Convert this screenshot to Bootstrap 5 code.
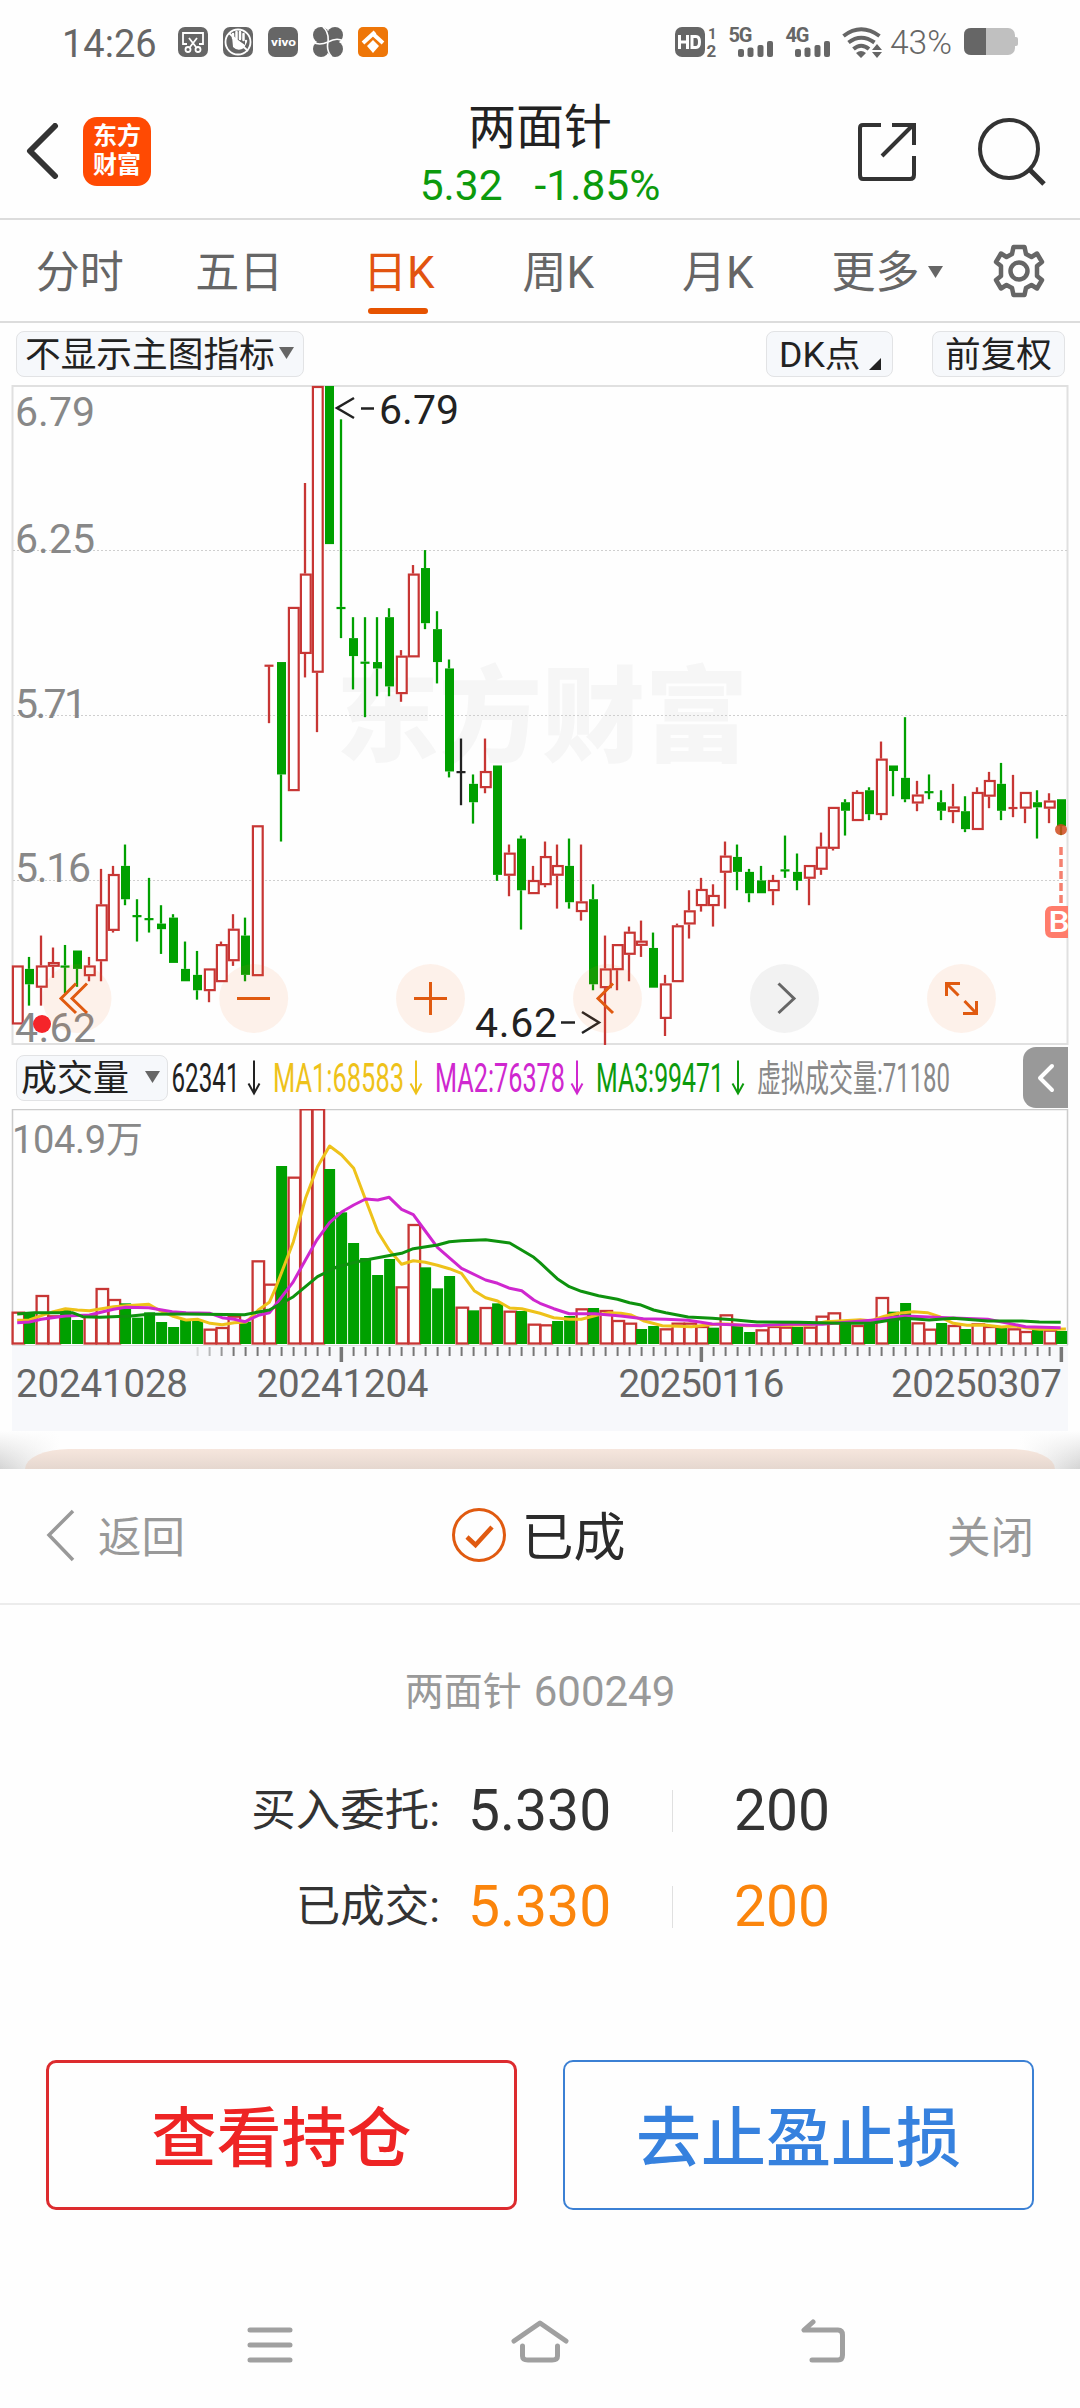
<!DOCTYPE html>
<html lang="zh-CN">
<head>
<meta charset="utf-8">
<meta name="viewport" content="width=device-width, initial-scale=1">
<title>两面针 600249</title>
<link href="https://cdn.jsdelivr.net/npm/bootstrap@5.3.0/dist/css/bootstrap.min.css" rel="stylesheet">
<style>
body{font-family:Roboto,"Noto Sans CJK SC",sans-serif;color:#222;background:#fefefe;width:1080px;line-height:1}
svg{display:block;flex:none}
svg text{font-family:Roboto,"Noto Sans CJK SC",sans-serif}
.status-bar{height:84px;padding:0 60px 0 62px;color:#666}
.clock{font-size:38px;width:116px;padding-top:3px}
.pct{font-size:33.5px;font-weight:300;padding-top:2px;margin-left:5px;width:66px}
.app-head{height:136px;border-bottom:2px solid #dcdcdc;padding:0 26px 0 26px}
.app-logo{width:68px;height:69px;border-radius:14px;background:#ff4a03;color:#fff;font-size:24px;line-height:29px;font-weight:700;margin-left:23px}
.stock-name{font-size:48px;line-height:56px;padding-top:13px}
.stock-quote{font-size:42.5px;line-height:58px;color:#0c9a0c;padding-top:1px}
.period-tabs{height:103px;border-bottom:2px solid #dcdcdc;font-size:44px}
.period-tabs .nav-link{width:159.5px;padding:5px 0 0;height:101px;color:#666;display:flex;align-items:center;justify-content:center}
.period-tabs .nav-link.active{color:#e25410;position:relative}
.period-tabs .nav-link.active::after{content:"";position:absolute;left:49px;bottom:7px;width:60px;height:6px;border-radius:3px;background:#e65300}
.tool-row{height:62px;padding:0 15px 0 16px;font-size:35.7px}
.pill{height:46px;border:1.5px solid #e2e3e5;border-radius:8px;background:#f6f8fb;display:flex;align-items:center;white-space:nowrap;padding-top:3px}
.vol-row{height:63px;padding-left:16px;font-size:36px}
.drawer-tab{width:45px;height:61px;background:#999;border-radius:13px 0 0 13px;margin-right:12px}
.axis-panel{background:#f7f8fb;margin:0 12px}
.peek{height:38px;padding-top:18px;background:linear-gradient(#fefefe,#fefefe00),linear-gradient(90deg,#d4d4d4,#fefefe 60px,#fefefe 1020px,#d4d4d4)}
.peek-bar{height:20px;margin:0 25px;border-radius:44px 44px 0 0/20px 20px 0 0;background:linear-gradient(#f6e6dd,#e5d7cf)}
.sheet{background:#fefefe;height:939px}
.sheet-head{height:136px;border-bottom:2px solid #ececec;padding:0 46px;color:#999;font-size:43.5px}
.sheet-head span,.sheet-close{padding-top:6px}
.sheet-title{font-size:52px;color:#2b2b2b}
.sheet-code{font-size:39px;color:#999;height:174px}
.sheet-code span{font-size:42px}
.order-line{height:96px;color:#333}
.order-label{width:440px;text-align:right;font-size:44.5px}
.order-num{font-size:57px;line-height:60px}
.order-price{width:232px;padding-left:28px}
.order-qty{border-left:1.5px solid #e0e0e0;height:42px;padding-left:61px;display:flex;align-items:center}
.filled{color:#fb850c}
.act{height:150px;border-radius:10px;font-size:65px;font-weight:500;background:#fefefe;padding:9px 0 0;line-height:1}
.act-red,.act-red:hover{border:3px solid #dc2b2e;color:#ee2424}
.act-blue,.act-blue:hover{border:2px solid #3b80d4;color:#3681de}
.nav-keys{padding-top:108px}
</style>
</head>
<body>
<div class="status-bar d-flex align-items-center justify-content-between">
  <div class="d-flex align-items-center">
    <div class="clock">14:26</div>
    <svg width="212" height="30" viewBox="0 0 212 30">
      <g fill="#666"><rect width="30" height="30" rx="7"/><rect x="45" width="30" height="30" rx="7"/><rect x="90" width="30" height="30" rx="7"/>
      <circle cx="143" cy="8" r="8"/><circle cx="157" cy="8" r="8"/><circle cx="143" cy="22" r="8"/><circle cx="157" cy="22" r="8"/><circle cx="150" cy="15" r="5"/></g>
      <rect x="180" width="30" height="30" rx="5" fill="#ee7608"/>
      <g fill="none" stroke="#fff" stroke-width="1.8"><path d="M9 17H5V6H25V17H21M11 11L18 20M19 11L12 20"/><circle cx="10" cy="22.500" r="2.500"/><circle cx="20" cy="22.500" r="2.500"/>
      <circle cx="60" cy="15" r="12.500"/><path d="M51 6L70 24"/><path d="M150 15Q151 5 145 0M150 15Q159 10 165 14M150 15Q148 24 154 30M150 15Q141 19 135 15" stroke-width="1.600"/></g>
      <path d="M55 11v-4M58.500 12V5M62 12V5M65.500 13V7" stroke="#fff" stroke-width="2.500" stroke-linecap="round"/><path d="M54 9L67 18V13q3-1 2 2l-3 6q-6 4-11-1z" fill="#fff"/>
      <text x="93" y="18.500" font-size="10" font-weight="700" fill="#fff" textLength="25" lengthAdjust="spacingAndGlyphs">vivo</text>
      <path d="M195 13l6 6-6 7-6-7z" fill="#fff"/><path d="M185 16L197 5M195 7l10 9" stroke="#fff" stroke-width="4" fill="none"/>
    </svg>
  </div>
  <div class="d-flex align-items-center">
    <svg width="210" height="34" viewBox="676 25 210 34" fill="#666">
      <rect x="676" y="27" width="30" height="30" rx="7"/>
      <path d="M680.500 35v14M688.500 35v14M680.500 42h8M693 36.500h4q3.500 0 3.500 5.500t-3.500 5.500h-4z" stroke="#fff" stroke-width="3" fill="none"/>
      <g font-weight="700"><text x="709" y="38.500" font-size="15">1</text><text x="707.500" y="56.500" font-size="17">2</text><text x="729.500" y="42" font-size="20" textLength="24">5G</text><text x="786.500" y="42" font-size="20" textLength="24">4G</text></g>
      <g id="sig"><rect x="739" y="49" width="6" height="8" rx="2"/><rect x="748.500" y="47.500" width="6" height="9.500" rx="2"/><rect x="758.500" y="45" width="6" height="12" rx="2"/><rect x="768" y="41" width="6" height="16" rx="2"/></g>
      <use href="#sig" x="57"/>
      <g fill="none" stroke="#666" stroke-width="4"><path d="M844.500 36Q862 22.500 880.500 36M849.500 42.500Q862 33 875.500 42.500M854.500 49Q862 42.500 870 49"/></g>
      <path d="M857 53q5-4 10 0l-5 5zM873 50l5-6 5 6zM873 52h10l-5 6z"/>
    </svg>
    <div class="pct">43%</div>
    <svg class="ms-2" width="56" height="28" viewBox="0 0 56 28"><rect width="51" height="27" rx="7" fill="#c0c0c0"/><rect x="49" y="9" width="5" height="9" rx="2" fill="#c0c0c0"/><path d="M7 0H22V27H7Q0 27 0 20V7Q0 0 7 0" fill="#666"/></svg>
  </div>
</div>

<header class="app-head d-flex align-items-center justify-content-between">
  <div class="d-flex align-items-center" style="width:250px">
    <svg width="34" height="56" viewBox="0 0 34 56"><path d="M29 3L4 28L29 53" fill="none" stroke="#333" stroke-width="6" stroke-linecap="round" stroke-linejoin="round"/></svg>
    <div class="app-logo d-flex flex-column align-items-center justify-content-center"><div>东方</div><div>财富</div></div>
  </div>
  <div class="text-center">
    <div class="stock-name">两面针</div>
    <div class="stock-quote"><span>5.32</span><span class="ms-4 ps-2">-1.85%</span></div>
  </div>
  <div class="d-flex align-items-center justify-content-end" style="width:250px">
    <svg width="204" height="72" viewBox="850 115 204 72" fill="none" stroke="#333" stroke-width="4"><path d="M881 125H863Q860 125 860 128V175Q860 179 863 179H910Q914 179 914 175V156M892 125H914V145M882 156L912 126"/><circle cx="1009" cy="149" r="29"/><path d="M1030 170L1044 184" stroke-width="5"/></svg>
  </div>
</header>

<nav class="period-tabs nav flex-nowrap align-items-center">
  <a class="nav-link">分时</a><a class="nav-link">五日</a><a class="nav-link active">日K</a><a class="nav-link">周K</a><a class="nav-link">月K</a>
  <a class="nav-link" style="width:180px">更多<svg class="ms-2" width="16" height="14" viewBox="0 0 16 14"><path d="M0 0H15L7.500 12z" fill="#666"/></svg></a>
  <svg style="margin-left:13px" width="56" height="56" viewBox="-28 -28 56 56" fill="none" stroke="#666" stroke-width="4.500" stroke-linejoin="round"><circle r="8.500"/><path d="M-5.500-24H5.500L7-17L12.500-14L18-17.500L23-9L18-5V5L23 9L18 17.500L12.500 14L7 17L5.500 24H-5.500L-7 17L-12.500 14L-18 17.500L-23 9L-18 5V-5L-23-9L-18-17.500L-12.500-14L-7-17z"/></svg>
</nav>

<div class="tool-row d-flex align-items-center">
  <div class="pill me-auto ps-2" style="width:288px"><span>不显示主图指标</span><svg class="ms-1 mb-1" width="15" height="14" viewBox="0 0 15 14"><path d="M0 0H15L7.500 12z" fill="#666"/></svg></div>
  <div class="pill ps-2" style="width:127px"><span class="ms-1">DK点</span><svg class="ms-2 mt-3" width="13" height="12" viewBox="0 0 13 12"><path d="M12 0V12H0z" fill="#222"/></svg></div>
  <div class="pill justify-content-center" style="width:133px;margin-left:39px">前复权</div>
</div>

<svg id="kchart" width="1080" height="661" viewBox="0 385 1080 661">
  <rect x="12.500" y="386" width="1055" height="658" fill="none" stroke="#e0e0e0" stroke-width="2"/>
  <text x="336" y="754" font-size="104" font-weight="900" fill="#f6f6f6" textLength="412" lengthAdjust="spacingAndGlyphs">东方财富</text>
  <path d="M13 550.500H1067M13 715.500H1067M13 880.500H1067" stroke="#cfcfcf" stroke-width="1" stroke-dasharray="2 2"/>
  <g id="candles"></g>
  <g font-size="41" fill="#888">
    <text x="15" y="425.500" textLength="80">6.79</text><text x="15" y="552.500" textLength="80">6.25</text><text x="15" y="717.500" textLength="72">5.71</text><text x="15" y="882" textLength="76">5.16</text><text x="15" y="1042" textLength="81">4.62</text>
  </g>
  <g font-size="41" fill="#222"><text x="379" y="423.500" textLength="80">6.79</text><text x="475" y="1036.500" textLength="82">4.62</text></g>
  <path d="M354 398L337 408L354 418M361 408.500H374M561 1022.500H575M582 1012L599 1022.500L582 1033" fill="none" stroke="#222" stroke-width="2.500"/>
  <circle cx="42" cy="1024" r="9" fill="#f5242a"/>
  <g fill="#f26a21" fill-opacity=".09"><circle cx="77" cy="998.500" r="34.500"/><circle cx="253.700" cy="998.500" r="34.500"/><circle cx="430.500" cy="998.500" r="34.500"/><circle cx="607.500" cy="998.500" r="34.500"/><circle cx="961.500" cy="998.500" r="34.500"/></g>
  <circle cx="784.500" cy="998.500" r="34.500" fill="#f2f2f2"/>
  <g fill="none" stroke="#e05a10" stroke-width="3"><path d="M76 983.500L61 998.500L76 1013M87 983.500L72 998.500L87 1013M237 998.500H270M414 998.500H447M430.500 982V1015M613 983.500L598 998.500L613 1013"/>
  <path d="M960 983.500H946.500V996M947 984L958.500 995.500M964.500 1001L976 1013M963 1013.500H976.500V1001"/></g>
  <path d="M778.500 983.500L794 998.500L778.500 1013" fill="none" stroke="#666" stroke-width="3"/>
  <ellipse cx="1061" cy="829.500" rx="6" ry="5.500" fill="#cf4a1c" fill-opacity=".85"/>
  <path d="M1061 847V903" stroke="#f5806f" stroke-width="3.500" stroke-dasharray="8 4"/>
  <path d="M1068 906H1052Q1045 906 1045 914V930Q1045 938 1052 938H1068z" fill="#ff7c6b"/>
  <text x="1048.500" y="932" font-size="29" font-weight="500" fill="#fff" textLength="21" lengthAdjust="spacingAndGlyphs">B</text>
</svg>

<div class="vol-row d-flex align-items-center">
  <div class="pill ps-1" style="width:152px">成交量<svg class="ms-3 mb-1" width="15" height="13" viewBox="0 0 15 13"><path d="M0 0H15L7.500 12z" fill="#666"/></svg></div>
  <svg class="me-auto" width="790" height="62" viewBox="168 1046.500 790 62" font-size="40">
    <text x="171.500" y="1091.500" fill="#222" textLength="68" lengthAdjust="spacingAndGlyphs">62341</text>
    <text x="273" y="1091.500" fill="#eec21a" textLength="131" lengthAdjust="spacingAndGlyphs">MA1:68583</text>
    <text x="435" y="1091.500" fill="#cf27cf" textLength="130" lengthAdjust="spacingAndGlyphs">MA2:76378</text>
    <text x="596" y="1091.500" fill="#0c9a0c" textLength="128" lengthAdjust="spacingAndGlyphs">MA3:99471</text>
    <text x="757" y="1091.500" fill="#888" font-size="37" textLength="120" lengthAdjust="spacingAndGlyphs">虚拟成交量</text>
    <text x="877" y="1091.500" fill="#888" textLength="73" lengthAdjust="spacingAndGlyphs">:71180</text>
    <g fill="none" stroke-width="2"><path d="M254 1060V1093M248.500 1083L254 1093L259.500 1083" stroke="#222"/><path d="M416 1060V1093M410.500 1083L416 1093L421.500 1083" stroke="#eec21a"/><path d="M577 1060V1093M571.500 1083L577 1093L582.500 1083" stroke="#cf27cf"/><path d="M738 1060V1093M732.500 1083L738 1093L743.500 1083" stroke="#0c9a0c"/></g>
  </svg>
  <div class="drawer-tab d-flex align-items-center justify-content-center"><svg width="18" height="30" viewBox="0 0 18 30"><path d="M15 3L3 15L15 27" fill="none" stroke="#fff" stroke-width="4" stroke-linecap="round" stroke-linejoin="round"/></svg></div>
</div>

<svg id="vchart" width="1080" height="236" viewBox="0 1109 1080 236">
  <path d="M12.500 1345V1109.500H1067.500V1345" fill="none" stroke="#ccc" stroke-width="1.500"/>
  <g id="bars"></g><g id="averages" fill="none" stroke-width="3" stroke-linejoin="round"></g>
  <text x="12" y="1153" font-size="38" fill="#888" textLength="94">104.9</text><text x="106" y="1153" font-size="37" fill="#888">万</text>
</svg>
<div class="axis-panel">
  <svg width="1056" height="86" viewBox="12 1345 1056 86"><g id="ticks"></g>
    <g font-size="38.500" fill="#666"><text x="16" y="1397" textLength="172">20241028</text><text x="256.500" y="1397" textLength="172">20241204</text><text x="618.500" y="1397" textLength="166">20250116</text><text x="891" y="1397" textLength="171">20250307</text></g>
  </svg>
</div>
<div class="peek"><div class="peek-bar"></div></div>

<section class="sheet">
  <div class="sheet-head d-flex align-items-center justify-content-between">
    <div class="d-flex align-items-center" style="width:170px"><svg width="30" height="54" viewBox="0 0 30 54"><path d="M27 2L3 26L27 51" fill="none" stroke="#999" stroke-width="3.500"/></svg><span style="margin-left:22px">返回</span></div>
    <div class="sheet-title d-flex align-items-center"><svg width="56" height="56" viewBox="0 0 56 56" fill="none" stroke="#e05a10"><circle cx="28" cy="27" r="25.500" stroke-width="3"/><path d="M16 29L24.500 37L41 19" stroke-width="4.500"/></svg><span style="margin:0 3px 0 14px">已成</span></div>
    <div class="text-end sheet-close" style="width:170px">关闭</div>
  </div>
  <div class="sheet-code d-flex align-items-center justify-content-center">两面针<span class="ms-2 ps-1">600249</span></div>
  <div style="margin-top:-16px">
    <div class="order-line d-flex align-items-center"><div class="order-label">买入委托:</div><div class="order-num order-price">5.330</div><div class="order-num order-qty">200</div></div>
    <div class="order-line d-flex align-items-center"><div class="order-label">已成交:</div><div class="order-num order-price filled">5.330</div><div class="order-num order-qty"><span class="filled">200</span></div></div>
  </div>
  <div class="d-flex justify-content-between" style="padding:105px 46px 0">
    <button class="btn act act-red" style="width:471px">查看持仓</button>
    <button class="btn act act-blue" style="width:471px">去止盈止损</button>
  </div>
  <div class="nav-keys d-flex justify-content-center">
    <svg width="610" height="50" viewBox="235 2318 610 50" fill="none" stroke="#a0a0a0" stroke-width="5" stroke-linecap="round" stroke-linejoin="round"><path d="M250 2330H290M250 2345H290M250 2360H290M514 2341L540 2323L566 2341M522.500 2346V2356Q522.500 2360 528 2360H552Q557.500 2360 557.500 2356V2346M813 2322L804 2330H838Q842.500 2330 842.500 2335V2355Q842.500 2360 838 2360H812"/></svg>
  </div>
</section>

<script src="https://cdn.jsdelivr.net/npm/bootstrap@5.3.0/dist/js/bootstrap.bundle.min.js"></script>
<script>
// Each session: colour, high, body top, body bottom, low (chart units, 14 = 6.79, 1554 = 4.62)
const K=`r1370,1370,1508,1508 g1350,1378,1414,1464 r1300,1370,1422,1464 r1328,1362,1373,1399 g1322,1370,1374,1435 g1335,1335,1378,1420 r1350,1370,1395,1407 r1144,1227,1360,1407 r1137,1156,1289,1293 g1087,1137,1215,1229 g1215,1252,1256,1314 g1165,1259,1263,1293 g1229,1272,1285,1343 g1250,1258,1364,1364 g1314,1378,1407,1407 g1336,1392,1428,1450 r1377,1377,1430,1456 r1314,1320,1409,1409 r1250,1284,1360,1371 g1258,1300,1392,1407 r1042,1042,1395,1395 r666,666,670,803 g660,660,923,1080 r531,531,962,962 r241,453,641,696 r14,14,685,824 g14,14,384,384 g92,531,535,604 g555,604,646,724 g555,659,663,789 g555,660,675,740 g534,555,717,740 r632,645,735,753 r433,453,649,649 g398,440,569,583 g541,583,660,710 g654,675,916,930 k839,915,919,995 g923,945,988,1038 r839,915,955,967 g902,902,1158,1172 r1087,1106,1160,1208 g1066,1073,1194,1286 r1137,1170,1203,1203 r1080,1114,1182,1187 r1087,1135,1160,1237 g1073,1137,1222,1237 r1087,1220,1245,1265 g1180,1215,1414,1428 r1300,1377,1423,1556 r1320,1320,1381,1428 r1279,1291,1345,1407 r1265,1312,1324,1350 g1293,1329,1422,1422 r1392,1412,1495,1535 r1272,1276,1409,1409 r1194,1241,1274,1307 r1165,1191,1231,1244 r1180,1205,1231,1279 r1080,1113,1153,1237 g1087,1116,1151,1194 g1144,1151,1201,1222 g1137,1171,1201,1201 r1158,1170,1196,1229 g1066,1145,1149,1165 g1108,1151,1172,1194 r1135,1135,1167,1229 r1059,1092,1146,1158 r999,999,1097,1101 g981,988,1008,1066 r960,964,1032,1032 g953,960,1016,1030 r846,886,1018,1030 g902,902,915,974 g789,931,981,988 r938,970,991,1009 g923,962,966,981 g960,988,1008,1030 r945,998,1011,1037 g974,1009,1051,1058 r953,964,1053,1053 r917,936,975,1002 g896,945,1008,1030 r924,999,1003,1023 r964,964,1003,1037 g960,988,1000,1073 r967,984,1003,1037 g981,981,1044,1065`.split(' ');
const col={r:'#c73634',g:'#00a000',k:'#222'};
const line=(x,a,b,c,w)=>`<path d="M${x} ${a}V${b}" stroke="${c}" stroke-width="${w}"/>`;
let out='';
K.forEach((s,i)=>{
  const c=col[s[0]],[h,t,b,l]=s.slice(1).split(',').map(v=>380+v/2.34),x=17+12*i;
  if(h<t)out+=line(x,h,t,c,2.3);
  if(b<l)out+=line(x,b,l,c,2.3);
  if(b-t<2.2)out+=`<rect x="${x-4.5}" y="${t}" width="9" height="2.200" fill="${c}"/>`;
  else if(s[0]=='r')out+=`<rect x="${x-4.1}" y="${t+1}" width="9.800" height="${Math.max(b-t-2,1)}" fill="#fefefe" stroke="${c}" stroke-width="2.200"/>`;
  else out+=`<rect x="${x-4}" y="${t}" width="9" height="${b-t}" fill="${c}"/>`;
});
document.getElementById('candles').innerHTML=out;

// Volume bars: colour and top edge
const V=`r815 g822 r765 r826 g808 g840 r826 r744 r777 g790 g833 g817 g846 g861 g840 g840 r866 r861 r827 g845 r661 r731 g378 r410 r205 r205 g387 g517 g609 g654 g705 g657 r739 r552 g682 g745 g708 r800 g811 r801 g790 r812 g813 r851 r853 g843 g828 r805 g804 r810 r840 r848 g867 g858 r865 r848 r848 r858 g863 r823 g857 g876 r868 r858 r860 g861 r860 r827 r817 g850 r855 g850 r771 g815 g789 r847 r866 g849 r855 g867 r850 r858 g860 r865 r873 g867 r869 g873`.split(' ');
out='';
V.forEach((s,i)=>{
  const t=1040+s.slice(1)/3,x=17.6+12*i;
  out+=s[0]=='g'?`<rect x="${x-5.5}" y="${t}" width="11" height="${1344-t}" fill="#00a000"/>`
   :`<rect x="${x-5}" y="${t+1}" width="11.500" height="${1342.5-t}" fill="#fefefe" stroke="#c73634" stroke-width="2.300"/>`;
});
document.getElementById('bars').innerHTML=out;
const A={
'#eec21a':'50,841 85,840 120,827 155,815 190,806 225,810 260,812 295,806 330,800 365,797 432,793 465,812 500,828 540,840 575,838 610,850 645,854 680,848 715,846 750,810 782,787 800,745 852,605 887,475 922,380 957,318 992,345 1027,385 1062,480 1097,575 1130,630 1166,673 1200,662 1235,667 1270,676 1305,686 1340,700 1377,752 1410,773 1445,783 1480,804 1515,806 1568,820 1608,833 1653,838 1688,838 1738,824 1768,818 1803,820 1833,825 1868,842 1923,857 1968,859 2008,860 2048,856 2088,852 2113,852 2168,857 2268,856 2348,855 2398,845 2448,842 2498,839 2528,842 2568,829 2608,820 2653,815 2693,818 2728,830 2768,850 2808,856 2858,855 2908,861 2948,858 2978,863 3018,868 3048,868 3095,867',
'#cf27cf':'50,848 85,846 120,838 190,828 260,825 330,808 365,802 432,803 500,815 540,818 610,820 645,833 680,838 712,845 750,826 782,818 800,795 850,728 887,660 920,600 957,548 992,516 1027,495 1062,477 1097,480 1130,472 1166,508 1200,524 1235,573 1270,622 1340,685 1410,720 1445,730 1480,745 1515,752 1550,780 1568,790 1608,806 1653,821 1728,821 1803,828 1868,836 1933,838 1998,841 2068,852 2128,854 2208,857 2288,853 2388,853 2438,848 2538,840 2628,828 2698,831 2768,834 2868,838 2928,850 2978,860 3080,863',
'#0e920e':'50,822 100,818 210,818 240,830 290,832 380,828 432,823 540,822 710,824 782,810 852,770 922,710 980,680 1050,662 1166,640 1200,626 1270,615 1305,605 1340,602 1410,599 1480,609 1550,652 1568,668 1618,716 1653,740 1688,754 1738,767 1793,778 1828,788 1858,794 1898,810 1933,818 1998,831 2068,835 2128,839 2198,846 2318,847 2438,850 2528,850 2588,840 2628,835 2698,840 2768,835 2868,843 2968,843 3018,846 3080,847'};
out='';
for(const c in A)out+=`<polyline stroke="${c}" points="${A[c].split(' ').map(p=>{const[x,y]=p.split(',');return (x/2.9037).toFixed(1)+','+(1040+y/3).toFixed(1)}).join(' ')}"/>`;
document.getElementById('averages').innerHTML=out;
out='<path d="M12 1345.500H1068" stroke="#ddd"/>';
for(let i=15;i<88;i++){const big=i==27||i==57||i==87;out+=`<rect x="${17.6+12*i-(big?2:1)}" y="1347" width="${big?3.5:2}" height="${big?15:9}" fill="#777" opacity="${Math.min(1,(i-14)/4)}"/>`}
document.getElementById('ticks').innerHTML=out;
</script>
</body>
</html>
